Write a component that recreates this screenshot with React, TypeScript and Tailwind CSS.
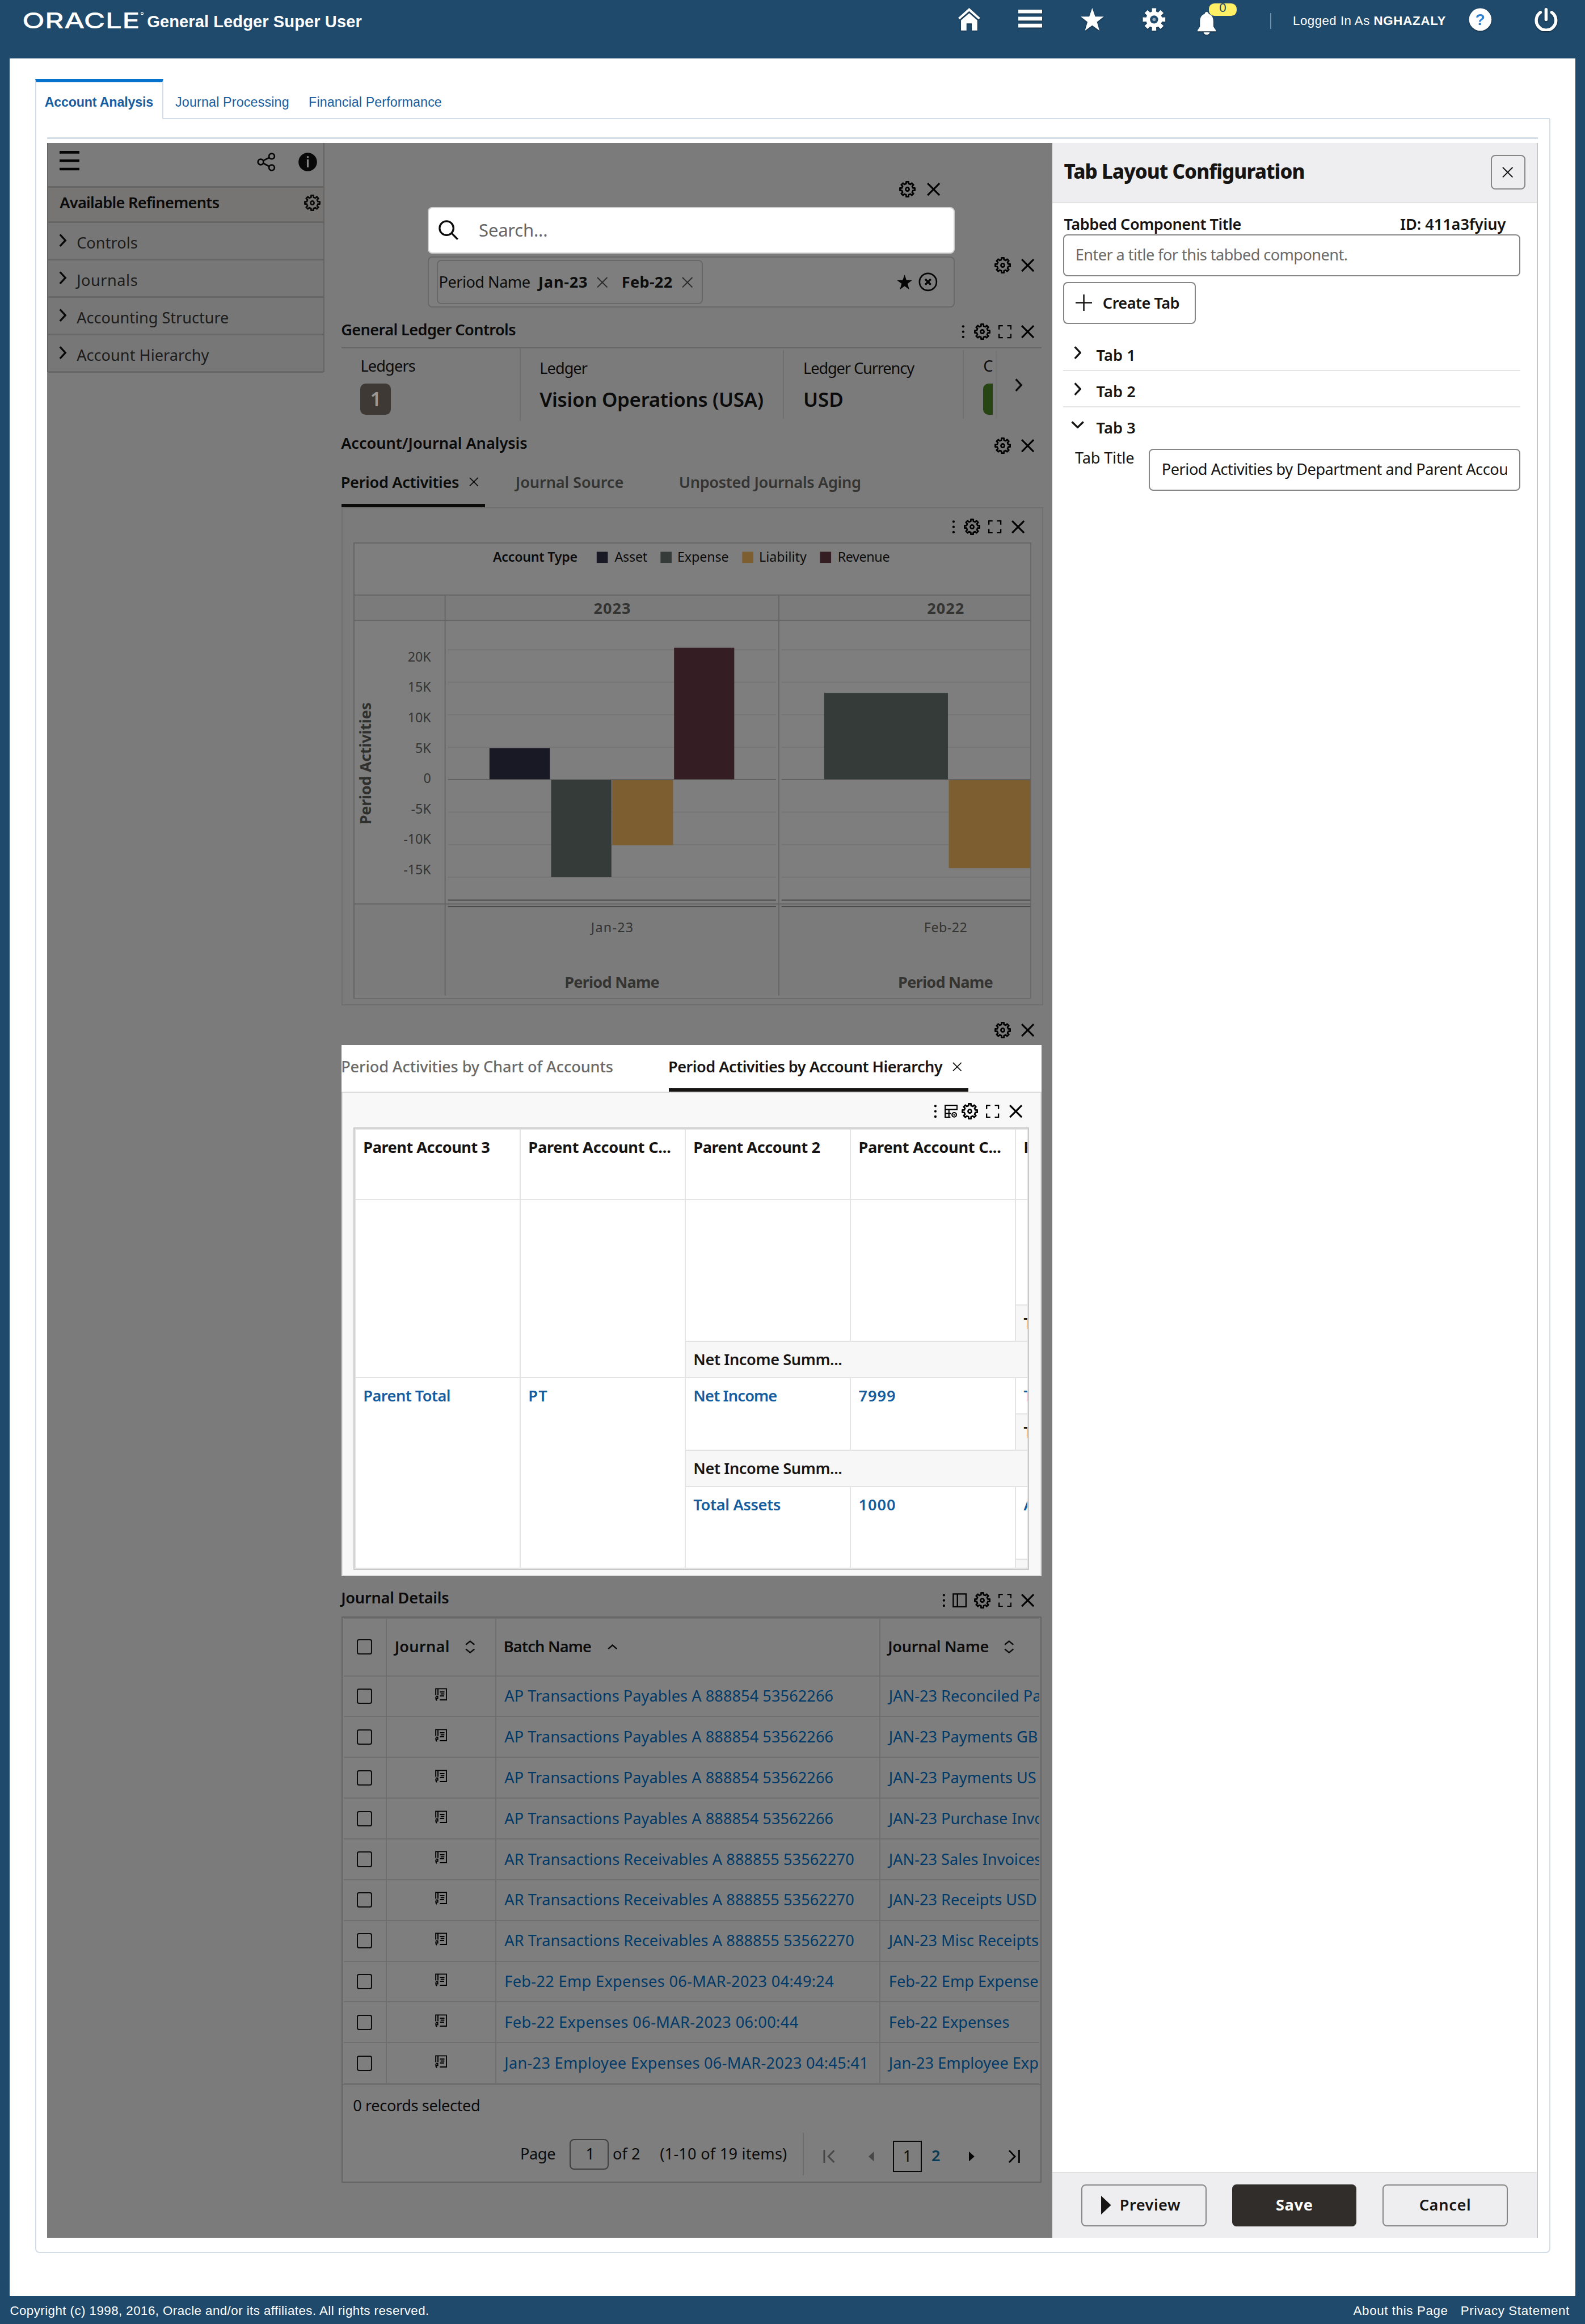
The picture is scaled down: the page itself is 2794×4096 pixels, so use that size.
import React from "react";

const NOTO = "Noto Sans";
const ARIAL = "Liberation Sans";

const SIZE: Record<string, string> = {
  "11.5": "text-[11.5px]",
  "12": "text-[12px]",
  "14": "text-[14px]",
  "15": "text-[15px]",
  "16": "text-[16px]",
  "18": "text-[18px]",
};
const WEIGHT: Record<string, string> = {
  "400": "font-normal",
  "500": "font-medium",
  "600": "font-semibold",
  "700": "font-bold",
  "800": "font-extrabold",
};

const pen = document.createElement("canvas").getContext("2d")!;

type TxtProps = {
  t: string;
  s?: number;
  g?: number;
  w?: number;
  arial?: boolean;
  className?: string;
};

/** One line of text, tracked so that it takes the width it is given. */
function Txt({ t, s = 14, g = 400, w, arial, className = "" }: TxtProps) {
  let spacing = 0;
  if (w) {
    pen.font = `${g} ${s}px "${arial ? ARIAL : NOTO}"`;
    spacing = (w + (s / 14) * 1.3 - pen.measureText(t).width) / t.length;
  }
  return (
    <span
      className={`block shrink-0 whitespace-pre leading-[20px] ${SIZE[String(s)]} ${WEIGHT[String(g)]} ${
        arial ? "font-['Liberation_Sans',sans-serif]" : "font-['Noto_Sans',sans-serif]"
      } ${className}`}
      style={{ letterSpacing: `${spacing}px` }}
    >
      {t}
    </span>
  );
}

/* ---------- icons ---------- */

function cog(teeth: number, c: number, ro: number, ri: number, wide: number, narrow: number) {
  const pts: string[] = [];
  const at = (r: number, a: number) => pts.push(`${(c + r * Math.sin(a)).toFixed(2)} ${(c - r * Math.cos(a)).toFixed(2)}`);
  for (let i = 0; i < teeth; i++) {
    const a = (i * 2 * Math.PI) / teeth;
    at(ri, a - wide);
    at(ro, a - narrow);
    at(ro, a + narrow);
    at(ri, a + wide);
  }
  return `M${pts.join("L")}Z`;
}

function Gear({ className = "" }: { className?: string }) {
  return (
    <svg viewBox="0 0 16 16" className={`h-[15px] w-[15px] shrink-0 ${className}`} fill="none" stroke="currentColor" strokeWidth="1.5">
      <path d={cog(8, 8, 7.3, 5.5, 0.22, 0.16)} strokeLinejoin="round" />
      <circle cx="8" cy="8" r="1.7" />
    </svg>
  );
}

function Cross({ className = "h-[12px] w-[12px]", thin }: { className?: string; thin?: boolean }) {
  return (
    <svg viewBox="0 0 12 12" className={`shrink-0 ${className}`} fill="none" stroke="currentColor" strokeWidth={thin ? 1.2 : 1.6}>
      <path d="M.6.6l10.8 10.8M11.4.6L.6 11.4" />
    </svg>
  );
}

function Dots({ className = "" }: { className?: string }) {
  return (
    <svg viewBox="0 0 3 12" className={`h-[12px] w-[3px] shrink-0 ${className}`} fill="currentColor">
      <circle cx="1.5" cy="1.2" r="1.1" />
      <circle cx="1.5" cy="6" r="1.1" />
      <circle cx="1.5" cy="10.8" r="1.1" />
    </svg>
  );
}

function Expand({ className = "" }: { className?: string }) {
  return (
    <svg viewBox="0 0 12 12" className={`h-[12px] w-[12px] shrink-0 ${className}`} fill="none" stroke="currentColor" strokeWidth="1.2">
      <path d="M.6 4V.6H4M8 .6h3.4V4M11.4 8v3.4H8M4 11.4H.6V8" />
    </svg>
  );
}

function Chevron({ down, className = "" }: { down?: boolean; className?: string }) {
  return down ? (
    <svg viewBox="0 0 12 7" className={`h-[7px] w-[12px] shrink-0 ${className}`} fill="none" stroke="currentColor" strokeWidth="1.7">
      <path d="M.8.8L6 5.8 11.2.8" />
    </svg>
  ) : (
    <svg viewBox="0 0 7 12" className={`h-[12px] w-[7px] shrink-0 ${className}`} fill="none" stroke="currentColor" strokeWidth="1.7">
      <path d="M.9.7L5.8 6 .9 11.3" />
    </svg>
  );
}

function GridGear({ className = "" }: { className?: string }) {
  return (
    <svg viewBox="0 0 12 12" className={`h-[12px] w-[12px] shrink-0 ${className}`} fill="none" stroke="currentColor" strokeWidth="1.1">
      <path d="M.6.6h10.800v3.700H.6zM5.400 11.400H.6V4.300M4 4.300v7.100M.6 7.900h5.200" />
      <circle cx="8.800" cy="9.200" r="2" />
      <circle cx="8.800" cy="9.200" r=".3" fill="currentColor" />
    </svg>
  );
}

function SidePanel({ className = "" }: { className?: string }) {
  return (
    <svg viewBox="0 0 13 13" className={`h-[13px] w-[13px] shrink-0 ${className}`} fill="none" stroke="currentColor" strokeWidth="1.2">
      <path d="M.7.7h11.6v11.6H.7zM4.500.7v11.6" />
    </svg>
  );
}

function Sorter() {
  return (
    <svg viewBox="0 0 9 12" className="h-[12px] w-[9px] shrink-0" fill="none" stroke="currentColor" strokeWidth="1.2">
      <path d="M.6 4L4.500.8 8.400 4M.6 8l3.900 3.200L8.400 8" />
    </svg>
  );
}

function JournalIcon() {
  return (
    <svg viewBox="0 0 11 12" className="h-[12px] w-[11px] shrink-0" fill="none" stroke="currentColor" strokeWidth="1">
      <path d="M.6 6.400V.7h9.800v10.100H4.200M2.600.7v5.700M4.300 3.600h4.200M5 5.400h3.400M4.400 7.200h3.800M.5 7.600h2.300M2.400 7.400v2.200H.7V8.200M.6 10.100l1 1.400" />
    </svg>
  );
}

function Checkbox() {
  return <span className="block h-[14px] w-[14px] shrink-0 rounded-[2px] border-[1.04px] border-[#0c0c0c]" />;
}

function GearCross() {
  return (
    <div className="ml-auto flex h-4 items-center pr-[6.2px] text-black">
      <Gear />
      <Cross className="ml-[9.6px] h-[12px] w-[12px]" />
    </div>
  );
}

function Tools({ extra }: { extra?: "grid" | "side" }) {
  return (
    <div className="ml-auto flex h-4 items-center text-black">
      <Dots />
      {extra === "grid" && <GridGear className="ml-[6.7px]" />}
      {extra === "side" && <SidePanel className="ml-[5.900px]" />}
      <Gear className={extra === "grid" ? "ml-[3.800px]" : extra === "side" ? "ml-[6.600px]" : "ml-[8.200px]"} />
      <Expand className="ml-[7.200px]" />
      <Cross className="ml-[9px] h-[12px] w-[12px]" />
    </div>
  );
}

/* ---------- page header ---------- */

function Header() {
  return (
    <header className="flex h-[53px] items-start text-white">
      <svg viewBox="0 0 112 20" className="mt-[8px] ml-[20px] h-[20px] w-[112px] shrink-0 overflow-visible" fill="#fff">
        <text x="0" y="17.400" fontFamily="Inter, sans-serif" fontWeight="500" fontSize="20" textLength="107" lengthAdjust="spacingAndGlyphs">
          ORACLE
        </text>
        <circle cx="109" cy="4" r="1" fill="none" stroke="#fff" strokeWidth=".6" />
      </svg>
      <Txt t="General Ledger Super User" s={15} g={700} w={193.8} arial className="mt-[9.600px] ml-[1.600px]" />
      <div className="ml-auto flex w-[569.600px] shrink-0 items-start">
        <svg viewBox="0 0 20 21" className="mt-[7px] h-[21px] w-[20px] drop-shadow-[0_1px_0.5px_rgba(0,0,0,.5)]" fill="#fff">
          <path d="M10 0L0 9l1.400 1.500L10 3l8.600 7.500L20 9zM10 4.800L2.600 11.200V20.500h5v-6.400h4.800v6.400h5v-9.300z" />
        </svg>
        <svg viewBox="0 0 22 17" className="mt-[9px] ml-[34.600px] h-[17px] w-[22px] drop-shadow-[0_1px_0.5px_rgba(0,0,0,.5)]" fill="#fff">
          <path d="M0 0h22v3.400H0zM0 6.500h22v3.400H0zM0 12.800h22v3.400H0z" />
        </svg>
        <svg viewBox="0 0 21 21" className="mt-[7px] ml-[34.800px] h-[21px] w-[21px] drop-shadow-[0_1px_0.5px_rgba(0,0,0,.5)]" fill="#fff">
          <path d="M10.500 0l2.700 7.800H21l-6.200 5 2.300 7.800-6.600-4.800-6.600 4.800 2.300-7.800L0 7.800h7.800z" />
        </svg>
        <svg viewBox="0 0 21 21" className="mt-[7px] ml-[35.400px] h-[21px] w-[21px] drop-shadow-[0_1px_0.5px_rgba(0,0,0,.5)]">
          <path d={cog(8, 10.5, 10.4, 7.4, 0.26, 0.19)} fill="#fff" />
          <circle cx="10.500" cy="10.500" r="3.700" fill="#1f4a6c" />
          <circle cx="10.500" cy="10.500" r="1.500" fill="#fff" opacity=".5" />
        </svg>
        <div className="relative ml-[29px] h-[31px] w-[36px]">
          <svg viewBox="0 0 17 21" className="absolute top-[10.600px] left-0 h-[21px] w-[17px] drop-shadow-[0_1px_0.5px_rgba(0,0,0,.5)]" fill="#fff">
            <path d="M8.300 0c1 0 1.700.9 1.900 1.900C13.300 2.600 14.400 5.600 14.400 8.600v4.800l2.200 3.200v1.100H0v-1.100l2.200-3.200V8.600c0-3 1.200-6 4.200-6.700C6.600.9 7.300 0 8.300 0zM5.500 18.500h5.600c-.3 1.400-1.400 2.200-2.800 2.200s-2.500-.8-2.800-2.200z" />
          </svg>
          <div className="absolute top-[3px] left-[10px] flex h-[11.600px] w-[25.400px] items-center justify-center rounded-[5px] bg-[#fff066] text-[#1f4a6c]">
            <span className="mb-[3px] font-['Liberation_Sans',sans-serif] text-[11.500px] leading-none">0</span>
          </div>
        </div>
        <div className="mt-[12px] ml-[29.600px] h-[14.400px] w-[1.040px] shrink-0 bg-[#6f93ad]" />
        <Txt t="Logged In As " s={11.5} w={73} arial className="mt-[9.200px] ml-[19.800px]" />
        <Txt t="NGHAZALY" s={11.5} g={700} w={64.8} arial className="mt-[9.200px]" />
        <svg viewBox="0 0 21 21" className="mt-[7.200px] ml-[20.500px] h-[21px] w-[21px] shrink-0 drop-shadow-[0_1px_0.5px_rgba(0,0,0,.5)]">
          <circle cx="10.500" cy="10.500" r="10.200" fill="#fff" />
          <text x="10.500" y="15.600" textAnchor="middle" fontFamily="Liberation Sans, sans-serif" fontWeight="700" fontSize="14.500" fill="#2f7fd0">
            ?
          </text>
        </svg>
        <svg viewBox="0 0 21 21" className="mt-[7.200px] ml-[38.800px] h-[21px] w-[21px] shrink-0 drop-shadow-[0_1px_0.5px_rgba(0,0,0,.5)]" fill="none" stroke="#fff" strokeWidth="2.800" strokeLinecap="round">
          <path d="M5.400 4a8.900 8.900 0 1 0 10.200 0M10.500 1.400v9.200" />
        </svg>
      </div>
    </header>
  );
}

/* ---------- sidebar ---------- */

function Sidebar() {
  const items: [string, number][] = [
    ["Controls", 54.2],
    ["Journals", 54.4],
    ["Accounting Structure", 137],
    ["Account Hierarchy", 119],
  ];
  return (
    <aside className="flex w-[252px] shrink-0 flex-col bg-[#7b7b7b]">
      <div className="h-[208.300px] border-x-[1.040px] border-[#656565]">
        <div className="flex h-[40.500px] items-start border-b-[2px] border-[#656565] text-[#050505]">
          <svg viewBox="0 0 18 18" className="mt-[7px] ml-[10px] h-[18px] w-[18px]" fill="currentColor">
            <path d="M0 0h18v2.400H0zM0 7.700h18v2.400H0zM0 15.300h18v2.400H0z" />
          </svg>
          <svg viewBox="0 0 17 17" className="mt-[8.500px] ml-[161.500px] h-[17px] w-[17px]" fill="none" stroke="currentColor" strokeWidth="1.400">
            <circle cx="13.400" cy="3.300" r="2.500" />
            <circle cx="3.400" cy="8.500" r="2.500" />
            <circle cx="13.400" cy="13.700" r="2.500" />
            <path d="M5.700 7.300l5.400-2.800M5.700 9.700l5.400 2.800" />
          </svg>
          <svg viewBox="0 0 17 17" className="mt-[8.500px] ml-[20.800px] h-[17px] w-[17px]">
            <circle cx="8.500" cy="8.500" r="8.400" fill="#080808" />
            <path d="M7.700 3.200h1.600v1.600H7.700zM7.700 6.200h1.600v7.200H7.700z" fill="#8a8a8a" />
          </svg>
        </div>
        <div className="flex h-[32px] items-start border-b-[2px] border-[#656565] bg-[#777573] text-[#0a0a0a]">
          <Txt t="Available Refinements" g={600} w={143.6} className="mt-[3.700px] ml-[10.200px]" />
          <Gear className="mt-[6px] ml-auto mr-[2.800px]" />
        </div>
        {items.map(([t, w]) => (
          <div key={t} className="flex h-[34px] items-start border-b-[1.600px] border-[#676767] bg-[#777777]">
            <Chevron className="mt-[10px] ml-[9.600px] text-[#080808]" />
            <Txt t={t} w={w} className="mt-[8.500px] ml-[9px] text-[#1c1c1c]" />
          </div>
        ))}
      </div>
    </aside>
  );
}

/* ---------- search and filters ---------- */

function SearchArea() {
  return (
    <>
      <div className="flex h-[58px] pt-[34px]">
        <div className="ml-[506.800px] flex h-4 items-center text-black">
          <Gear />
          <Cross className="ml-[10.100px] h-[12px] w-[12px]" />
        </div>
      </div>
      <div className="ml-[78.700px] flex h-[42.200px] w-[478.500px] items-center rounded-[4px] border-[1.040px] border-[#cfcfcf] bg-white">
        <svg viewBox="0 0 18 18" className="ml-[8.600px] h-[18px] w-[18px]" fill="none" stroke="#0b0b0b" strokeWidth="1.700">
          <circle cx="7.300" cy="7.300" r="6.300" />
          <path d="M11.700 11.700l5.700 5.700" />
        </svg>
        <Txt t="Search..." s={16} w={61} className="ml-[18.600px] text-[#666]" />
      </div>
      <div className="mt-[2.800px] flex h-[46.500px] items-start">
        <div className="ml-[78.700px] flex h-[46.500px] w-[478.500px] shrink-0 items-center rounded-[4px] border-[1.040px] border-[#686868] bg-[#7e7e7e]">
          <div className="ml-[6.800px] flex h-[40.300px] w-[241.800px] items-center rounded-[4px] border-[1.040px] border-[#686868] text-[#0c0c0c]">
            <Txt t="Period Name" w={81.7} className="ml-[1px]" />
            <Txt t="Jan-23" g={700} w={43.7} className="ml-[7.500px]" />
            <Cross thin className="ml-[8.200px] h-[10px] w-[10px] text-[#2c2c2c]" />
            <Txt t="Feb-22" g={700} w={45} className="ml-[12.400px]" />
            <Cross thin className="ml-[8.700px] h-[10px] w-[10px] text-[#2c2c2c]" />
          </div>
          <svg viewBox="0 0 14 14" className="ml-[176.200px] h-[14px] w-[14px]" fill="#050505">
            <path d="M7 0l1.700 5H14L9.700 8.200 11.300 13.600 7 10.400 2.700 13.600 4.300 8.200 0 5h5.300z" />
          </svg>
          <svg viewBox="0 0 18 18" className="ml-[6px] h-[17.400px] w-[17.400px]" fill="none" stroke="#050505" strokeWidth="1.400">
            <circle cx="9" cy="9" r="8" />
            <path d="M6.400 6.400l5.200 5.200M11.600 6.400l-5.200 5.200" strokeWidth="1.800" />
          </svg>
        </div>
        <GearCross />
      </div>
    </>
  );
}

function Heading({ t, w, children }: { t: string; w: number; children: React.ReactNode }) {
  return (
    <div className="flex h-full items-start">
      <Txt t={t} g={600} w={w} className="mt-[9.900px] -ml-[0.300px] text-[#0a0a0a]" />
      <div className="mt-[14px] ml-auto pr-[6.200px]">{children}</div>
    </div>
  );
}

function LedgerControls() {
  return (
    <>
      <div className="h-[36px]">
        <Heading t="General Ledger Controls" w={157.4}>
          <Tools />
        </Heading>
      </div>
      <div className="flex h-[67.500px] items-start overflow-hidden border-t-[1.040px] border-[#656565] text-[#0b0b0b]">
        <div className="h-[66px] w-[162.900px] shrink-0 border-r-[1.040px] border-[#6f6f6f] pl-[17.400px] pt-[6.200px]">
          <Txt t="Ledgers" w={48.4} />
          <div className="mt-[5.800px] flex h-[28px] w-[27.800px] items-center justify-center rounded-[5px] bg-[#3e3935]">
            <Txt t="1" s={18} g={600} className="text-[#9b9793]" />
          </div>
        </div>
        <div className="mt-[1.500px] h-[62.500px] w-[239.500px] shrink-0 border-r-[1.040px] border-[#6f6f6f] pl-[17.300px] pt-[6.500px]">
          <Txt t="Ledger" w={41.8} />
          <Txt t="Vision Operations (USA)" s={18} g={600} w={201.7} className="mt-[8.300px]" />
        </div>
        <div className="mt-[1.500px] h-[62.500px] w-[163px] shrink-0 border-r-[1.040px] border-[#6f6f6f] pl-[17.300px] pt-[6.500px]">
          <Txt t="Ledger Currency" w={99.2} />
          <Txt t="USD" s={18} g={600} w={34.8} className="mt-[8.300px]" />
        </div>
        <div className="h-[66px] w-[26.400px] shrink-0 overflow-hidden pl-[17.800px] pt-[6.200px]">
          <Txt t="C" />
          <div className="mt-[5.800px] h-[28px] w-[20px] rounded-[5px] bg-[#264513]" />
        </div>
        <div className="mt-[2px] ml-[2.600px] h-[62px] w-[2px] shrink-0 bg-linear-to-r from-[#747474] to-[#7b7b7b]" />
        <Chevron className="mt-[27px] ml-[15.500px]" />
      </div>
    </>
  );
}

/* ---------- chart ---------- */

type ChartText = { x: number; y: number; t: string; w?: number; s?: number; g?: number; a?: "start" | "middle" | "end"; c?: string };

function ChartLabel({ x, y, t, w, s = 12, g = 400, a = "start", c = "#343432" }: ChartText) {
  return (
    <text x={x} y={y} fontFamily="Noto Sans, sans-serif" fontSize={s} fontWeight={g} textAnchor={a} fill={c} textLength={w}>
      {t}
    </text>
  );
}

function Chart() {
  const grid = [590, 619.5, 649, 678.5, 737.5, 767, 796.5];
  const bars: [number, number, number, number, string][] = [
    [444.6, 679.3, 54.9, 28.9, "#181924"],
    [500.6, 708, 54.8, 88.6, "#343b39"],
    [556.1, 708, 55.3, 59.5, "#7c5e31"],
    [612.3, 588.2, 54.7, 120, "#351e23"],
    [748.7, 629.2, 112.4, 79, "#343b39"],
    [861.9, 708, 75, 80.4, "#7c5e31"],
  ];
  const ticks: [string, number][] = [
    ["20K", 600.5],
    ["15K", 628],
    ["10K", 656],
    ["5K", 683.6],
    ["0", 710.9],
    ["-5K", 738.9],
    ["-10K", 766.4],
    ["-15K", 793.9],
  ];
  const legend: [string, number, number, number, string][] = [
    ["Asset", 542, 558.3, 29.8, "#181924"],
    ["Expense", 600, 615.3, 46.7, "#343b39"],
    ["Liability", 674.2, 689.5, 43.2, "#7c5e31"],
    ["Revenue", 744.9, 761, 47.3, "#351e23"],
  ];
  return (
    <svg viewBox="321 492.500 616 414.800" className="h-[414.800px] w-[616px]">
      <rect x="321" y="492.500" width="616" height="414.800" fill="#7e7e7e" />
      <rect x="322" y="541" width="614" height="22.500" fill="#7b7b7b" />
      <rect x="322" y="821.500" width="614" height="82" fill="#7b7b7b" />
      <ChartLabel x={447.8} y={510} t="Account Type" w={76.8} g={600} c="#0c0c0c" />
      {legend.map(([t, sx, tx, w, c]) => (
        <g key={t}>
          <rect x={sx} y="501" width="10.100" height="10.100" fill={c} />
          <ChartLabel x={tx} y={510} t={t} w={w} c="#0c0c0c" />
        </g>
      ))}
      {grid.map((y) => (
        <path key={y} d={`M406.900 ${y}H704.900M710 ${y}H937`} stroke="#747474" strokeWidth="1" />
      ))}
      {bars.map(([x, y, w, h, c]) => (
        <rect key={x} x={x} y={y} width={w} height={h} fill={c} />
      ))}
      <path d="M406.900 708H704.900M710 708H937" stroke="#5c5c5c" strokeWidth="1" />
      <path d="M406.900 817.500H704.900M710 817.500H937M406.900 823.400H704.900M710 823.400H937" stroke="#4b4b4b" strokeWidth="1" />
      <g stroke="#656565" strokeWidth="1" fill="none">
        <path d="M321 540.300H937M321 563.500H937M321 820.900H937M404.300 540.300V904M707.500 540.300V904" />
        <rect x="321.500" y="493" width="615" height="413.800" />
      </g>
      <ChartLabel x={556} y={557.5} t="2023" s={14} g={700} a="middle" w={33.5} />
      <ChartLabel x={859} y={557.5} t="2022" s={14} g={700} a="middle" w={33.5} />
      {ticks.map(([t, y]) => (
        <ChartLabel key={t} x={391.5} y={y} t={t} a="end" />
      ))}
      <text transform="translate(337.100 748.800) rotate(-90)" fontFamily="Noto Sans, sans-serif" fontSize="14" fontWeight="700" fill="#2f2f2e" textLength="111">
        Period Activities
      </text>
      <ChartLabel x={556} y={846.4} t="Jan-23" a="middle" w={38.3} />
      <ChartLabel x={859} y={846.4} t="Feb-22" a="middle" w={39.2} />
      <ChartLabel x={556} y={897.3} t="Period Name" s={14} g={700} a="middle" w={86.4} />
      <ChartLabel x={859} y={897.3} t="Period Name" s={14} g={700} a="middle" w={86.4} />
    </svg>
  );
}

function AnalysisPanel() {
  return (
    <>
      <div className="h-[37px]">
        <Heading t="Account/Journal Analysis" w={168}>
          <div className="-mr-[6.200px]">
            <GearCross />
          </div>
        </Heading>
      </div>
      <div className="flex h-[41px] items-start text-[#343432]">
        <div className="flex h-[41px] w-[130.500px] shrink-0 items-start border-b-[3.100px] border-[#0b0b0a] text-[#0b0b0a]">
          <Txt t="Period Activities" g={600} w={106.1} className="mt-[8.200px] -ml-[0.500px]" />
          <Cross thin className="mt-[13.500px] ml-[9.300px] h-[8.500px] w-[8.500px]" />
        </div>
        <Txt t="Journal Source" g={600} w={96.8} className="mt-[8.200px] ml-[27.800px]" />
        <Txt t="Unposted Journals Aging" g={600} w={164.1} className="mt-[8.200px] ml-[50.300px]" />
      </div>
      <div className="h-[452.500px] w-[637.700px] border-[1.040px] border-[#6f6f6f]">
        <div className="flex h-[30.500px] items-start pt-[8.600px] pr-[15.800px]">
          <Tools />
        </div>
        <div className="ml-[9.800px]">
          <Chart />
        </div>
      </div>
    </>
  );
}

/* ---------- hierarchy panel ---------- */

function Cell({ t, w, g = 600, className = "" }: { t?: string; w?: number; g?: number; className?: string }) {
  return (
    <div className={`shrink-0 overflow-hidden border-[#e4e4e4] pt-[6.200px] pl-[7px] ${className}`}>{t && <Txt t={t} w={w} g={g} />}</div>
  );
}

function HierarchyPanel() {
  const total = (
    <Cell t="Net Income Summ..." w={133.8} className="h-[33px] w-[320px] border-b-[1.040px] border-[#dcdcdc] bg-[#f7f7f7] text-[#161513]" />
  );
  const col = "w-[150px] border-r-[1.040px]";
  return (
    <section className="h-[482.200px] w-[636px] overflow-hidden bg-white">
      <div className="flex h-[42.300px] items-start text-[#6b6a68]">
        <Txt t="Period Activities by Chart of Accounts" g={500} w={246} className="mt-[9.600px] -ml-[0.300px]" />
        <div className="ml-[50.600px] flex h-[42px] w-[272.300px] shrink-0 items-start border-b-[3.100px] border-[#161513] text-[#161513]">
          <Txt t="Period Activities by Account Hierarchy" g={600} w={247.8} className="mt-[9.600px] -ml-[0.500px]" />
          <Cross thin className="mt-[15.500px] ml-[9px] h-[8.500px] w-[8.500px]" />
        </div>
      </div>
      <div className="h-[439.900px] border-[1.040px] border-[#dedede] bg-[#f8f8f8]">
        <div className="flex h-[31px] items-start pt-[8.700px] pr-[16.100px]">
          <Tools extra="grid" />
        </div>
        <div className="ml-[9.800px] h-[402.300px] w-[614.200px] overflow-hidden border-[1.040px] border-[#c9c9c9] bg-white">
          <div className="h-[400.300px] w-[612.200px] overflow-hidden border-[1.040px] border-[#e4e4e4] text-[#145c9e]">
            <div className="flex h-[64px] border-b-[1.040px] border-[#e4e4e4] text-[#161513]">
              <Cell t="Parent Account 3" g={700} w={113.7} className={col} />
              <Cell t="Parent Account C..." g={700} w={128.2} className={col} />
              <Cell t="Parent Account 2" g={700} w={113.7} className={col} />
              <Cell t="Parent Account C..." g={700} w={128.2} className={col} />
              <Cell t="P" g={700} className="w-[20px]" />
            </div>
            <div className="flex h-[334.500px]">
              <div className="w-[150px] shrink-0 border-r-[1.040px] border-[#e4e4e4]">
                <Cell className="h-[161.800px] border-b-[1.040px]" />
                <Cell t="Parent Total" w={77.9} />
              </div>
              <div className="w-[150px] shrink-0 border-r-[1.040px] border-[#e4e4e4]">
                <Cell className="h-[161.800px] border-b-[1.040px]" />
                <Cell t="PT" w={16.5} />
              </div>
              <div className="shrink-0">
                <div className="flex h-[128.800px] border-b-[1.040px] border-[#e4e4e4]">
                  <Cell className={col} />
                  <Cell className={col} />
                  <div className="flex w-[20px] flex-col">
                    <Cell className="h-[95.800px] border-b-[1.040px]" />
                    <Cell t="T" className="h-[32px] bg-[#f7f7f7] text-[#161513]" />
                  </div>
                </div>
                {total}
                <div className="flex h-[66px] border-b-[1.040px] border-[#e4e4e4]">
                  <Cell t="Net Income" w={74.5} className={col} />
                  <Cell t="7999" w={32.8} className={col} />
                  <div className="flex w-[20px] flex-col">
                    <Cell t="T" className="h-[33px] border-b-[1.040px]" />
                    <Cell t="T" className="h-[32px] bg-[#f7f7f7] text-[#161513]" />
                  </div>
                </div>
                {total}
                <div className="flex h-[73.700px]">
                  <Cell t="Total Assets" w={77.9} className={col} />
                  <Cell t="1000" w={32.8} className={col} />
                  <div className="flex w-[20px] flex-col">
                    <Cell t="A" className="h-[66px] border-b-[1.040px]" />
                    <div className="h-[8px] bg-[#f7f7f7]" />
                  </div>
                </div>
              </div>
            </div>
          </div>
        </div>
      </div>
    </section>
  );
}

/* ---------- journal table ---------- */

const AP: [string, number] = ["AP Transactions Payables A 888854 53562266", 297.6];
const AR: [string, number] = ["AR Transactions Receivables A 888855 53562270", 316.5];
const JOURNALS: [[string, number], string][] = [
  [AP, "JAN-23 Reconciled Pa"],
  [AP, "JAN-23 Payments GB"],
  [AP, "JAN-23 Payments US"],
  [AP, "JAN-23 Purchase Invo"],
  [AR, "JAN-23 Sales Invoices"],
  [AR, "JAN-23 Receipts USD"],
  [AR, "JAN-23 Misc Receipts"],
  [["Feb-22 Emp Expenses 06-MAR-2023 04:49:24", 298.1], "Feb-22 Emp Expenses"],
  [["Feb-22 Expenses 06-MAR-2023 06:00:44", 265.9], "Feb-22 Expenses"],
  [["Jan-23 Employee Expenses 06-MAR-2023 04:45:41", 329.6], "Jan-23 Employee Exp"],
];

function JournalTable() {
  const line = "border-r-[1.040px] border-[#6f6f6f]";
  return (
    <>
      <div className="h-[36.500px]">
        <Heading t="Journal Details" w={96.8}>
          <Tools extra="side" />
        </Heading>
      </div>
      <div className="h-[514.300px] w-[636px] border-[1.040px] border-[#646464] bg-[#7e7e7e] text-[#0c0c0c]">
        <div className="mx-[1px] overflow-hidden border-t-[1.040px] border-[#6f6f6f]">
          <div className="flex h-[52.500px] border-b-[1.040px] border-[#6f6f6f]">
            <div className={`flex w-[39.400px] shrink-0 items-center pl-[12.200px] ${line}`}>
              <Checkbox />
            </div>
            <div className={`flex w-[99.200px] shrink-0 items-center pl-[7px] ${line}`}>
              <Txt t="Journal" g={600} w={48.7} />
              <span className="ml-[14.300px]">
                <Sorter />
              </span>
            </div>
            <div className={`flex w-[349px] shrink-0 items-center pl-[6.800px] ${line}`}>
              <Txt t="Batch Name" g={600} w={78.3} />
              <svg viewBox="0 0 9 5" className="ml-[15px] h-[5px] w-[9px]" fill="none" stroke="currentColor" strokeWidth="1.300">
                <path d="M.6 4.200L4.500.8l3.900 3.400" />
              </svg>
            </div>
            <div className="flex items-center pl-[7px]">
              <Txt t="Journal Name" g={600} w={90.3} />
              <span className="ml-[14px]">
                <Sorter />
              </span>
            </div>
          </div>
          {JOURNALS.map(([[batch, w], name], i) => (
            <div key={i} className="flex h-[37.040px] overflow-hidden border-b-[1.040px] border-[#6f6f6f] text-[#003a68]">
              <div className={`flex w-[39.400px] shrink-0 items-center pl-[12.200px] ${line}`}>
                <Checkbox />
              </div>
              <div className={`flex w-[99.200px] shrink-0 justify-center pt-[10.500px] text-black ${line}`}>
                <JournalIcon />
              </div>
              <div className={`flex w-[349px] shrink-0 items-center pl-[7.600px] ${line}`}>
                <Txt t={batch} w={w} />
              </div>
              <div className="flex items-center pl-[7.800px]">
                <Txt t={name} />
              </div>
            </div>
          ))}
        </div>
        <div className="h-[1px] bg-[#6f6f6f]" />
        <Txt t="0 records selected" w={114.3} className="mt-[8.700px] ml-[9.500px]" />
        <div className="mt-[14px] flex h-[40px] items-center">
          <Txt t="Page" w={30.8} className="ml-[161.400px]" />
          <div className="ml-[13px] flex h-[28px] w-[35.200px] shrink-0 items-center rounded-[4px] border-[1.040px] border-[#3f3f3f] pl-[13.500px]">
            <Txt t="1" />
          </div>
          <Txt t="of 2" w={23.8} className="ml-[3.800px]" />
          <Txt t="(1-10 of 19 items)" w={114.3} className="ml-[17.800px]" />
          <div className="ml-[14.100px] h-[38.500px] w-[1.040px] shrink-0 bg-[#6c6c6c]" />
          <svg viewBox="0 0 11 12" className="mt-[4px] ml-[17.500px] h-[12px] w-[11px] shrink-0" fill="none" stroke="#474747" strokeWidth="1.500">
            <path d="M1 0v12M10 .6L4.800 6l5.200 5.400" />
          </svg>
          <svg viewBox="0 0 5 9" className="mt-[4px] ml-[30.400px] h-[9px] w-[5px] shrink-0" fill="#474747">
            <path d="M5 0v9L0 4.500z" />
          </svg>
          <div className="mt-[3.500px] ml-[17.100px] flex h-[28.500px] w-[26.200px] shrink-0 items-center justify-center border-[1.040px] border-[#080808]">
            <Txt t="1" />
          </div>
          <Txt t="2" g={600} className="mt-[3px] ml-[8.800px] text-[#0a3a53]" />
          <svg viewBox="0 0 5 9" className="mt-[4px] ml-[26.300px] h-[9px] w-[5px] shrink-0" fill="#050505">
            <path d="M0 0v9l5-4.500z" />
          </svg>
          <svg viewBox="0 0 11 12" className="mt-[4px] ml-[30.500px] h-[12px] w-[11px] shrink-0" fill="none" stroke="#050505" strokeWidth="1.500">
            <path d="M10 0v12M1 .6L6.200 6 1 11.400" />
          </svg>
        </div>
      </div>
    </>
  );
}

/* ---------- drawer ---------- */

function TabRow({ t, w, open }: { t: string; w: number; open?: boolean }) {
  return (
    <div className={`flex h-[33px] items-start ${open ? "" : "border-b-[1.040px] border-[#e4e4e4]"}`}>
      <span className={open ? "ml-[7px] mt-[12px]" : "ml-[9.500px] mt-[10px]"}>
        <Chevron down={open} />
      </span>
      <Txt t={t} g={600} w={w} className={open ? "mt-[8.500px] ml-[11px]" : "mt-[8.500px] ml-[13.500px]"} />
    </div>
  );
}

function Drawer() {
  const field = "flex h-[38.200px] items-center overflow-hidden rounded-[4px] border-[1.040px] border-[#878684] bg-white";
  return (
    <section className="flex w-[441px] shrink-0 flex-col border-r-[1.040px] border-[#c6c6c6] bg-white text-[#161513]">
      <div className="flex h-[54.600px] items-start border-b-[1.040px] border-[#e2e2e2] bg-[#eeeef0]">
        <Txt t="Tab Layout Configuration" s={18} g={800} w={217} className="mt-[16px] ml-[10.600px]" />
        <div className="mt-[10.700px] mr-[10.200px] ml-auto flex h-[31.200px] w-[31.600px] items-center justify-center rounded-[4px] border-[1.040px] border-[#878684]">
          <Cross thin className="h-[10px] w-[10px]" />
        </div>
      </div>
      <div className="flex-1 pr-[15px] pl-[10px]">
        <div className="flex h-[28px] items-start pt-[9.100px]">
          <Txt t="Tabbed Component Title" g={600} w={159.7} className="ml-[0.600px]" />
          <Txt t="ID: 411a3fyiuy" g={600} w={94.7} className="mr-[13px] ml-auto" />
        </div>
        <div className={field}>
          <Txt t="Enter a title for this tabbed component." w={246} className="ml-[10px] text-[#6b6a68]" />
        </div>
        <div className="mt-[5.200px] flex h-[38.300px] w-[120.500px] items-center rounded-[4px] border-[1.040px] border-[#878684]">
          <svg viewBox="0 0 15 15" className="ml-[10.300px] h-[15px] w-[15px]" fill="none" stroke="currentColor" strokeWidth="1.300">
            <path d="M7.500 0v15M0 7.500h15" />
          </svg>
          <Txt t="Create Tab" g={600} w={68.4} className="ml-[9.500px]" />
        </div>
        <div className="mt-[10px]">
          <TabRow t="Tab 1" w={34.5} />
          <TabRow t="Tab 2" w={34.5} />
          <TabRow t="Tab 3" w={34.5} open />
        </div>
        <div className="mt-[4.300px] flex items-start">
          <Txt t="Tab Title" w={52.5} className="mt-[-1.500px] ml-[10.700px]" />
          <div className={`${field} ml-auto w-[337.600px] px-[11px]`}>
            <div className="w-full overflow-hidden">
              <Txt t="Period Activities by Department and Parent Accou" w={313.5} />
            </div>
          </div>
        </div>
      </div>
      <div className="flex h-[59.500px] items-start border-t-[1.040px] border-[#e2e2e2] bg-[#eeeef0]">
        <div className="mt-[10px] ml-[26.400px] flex h-[38.300px] w-[113.600px] items-center rounded-[4px] border-[1.040px] border-[#878684]">
          <svg viewBox="0 0 9 17" className="ml-[16.800px] h-[17px] w-[9px]" fill="currentColor">
            <path d="M0 0v17l9-8.500z" />
          </svg>
          <Txt t="Preview" g={600} w={54} className="ml-[8px]" />
        </div>
        <div className="mt-[10px] ml-[23.500px] flex h-[38.300px] w-[113px] items-center justify-center rounded-[4px] bg-[#312d2a] text-white">
          <Txt t="Save" g={700} w={32.5} />
        </div>
        <div className="mt-[10px] ml-[23.700px] flex h-[38.300px] w-[113.500px] items-center justify-center rounded-[4px] border-[1.040px] border-[#878684]">
          <Txt t="Cancel" g={600} w={46} />
        </div>
      </div>
    </section>
  );
}

/* ---------- page ---------- */

export default function App() {
  return (
    <div className="h-[4096px] w-full overflow-hidden bg-[#1f4a6c]">
      <div className="flex h-[2111px] w-[1440px] flex-col [zoom:1.9403]">
        <Header />
        <main className="mx-[9px] h-[2033px] bg-white px-[23px] pt-[18.400px]">
          <nav className="relative flex h-[36.700px] items-start text-[#155ea2]">
            <div className="flex h-[36.700px] w-[116.600px] shrink-0 items-start border-x-[1.040px] border-t-[3.100px] border-[#d3dde7] border-t-[#0572ce] bg-white">
              <Txt t="Account Analysis" s={12} g={700} w={98} arial className="mt-[8.500px] ml-[7.500px]" />
            </div>
            <Txt t="Journal Processing" s={12} w={102.4} arial className="mt-[11.600px] ml-[10.700px]" />
            <Txt t="Financial Performance" s={12} w={120} arial className="mt-[11.600px] ml-[17.700px]" />
          </nav>
          <div className="-mt-[1.040px] flex">
            <div className="h-[1.100px] w-[1.040px] bg-[#d3dde7]" />
            <div className="h-[1.100px] w-[114.500px] shrink-0" />
            <div className="h-[1.100px] w-[1261px] bg-[#d3dde7]" />
          </div>
          <div className="h-[1938.500px] w-[1376.500px] rounded-b-[4px] border-x-[1.040px] border-b-[1.040px] border-[#d3dde7] px-[10px] pt-[16.800px]">
            <div className="h-[1.100px] w-[1354px] bg-[#d3dde7]" />
            <div className="mt-[4px] flex h-[1902.500px] w-[1354px] bg-[#7b7b7b]">
              <Sidebar />
              <div className="w-[661px] shrink-0 overflow-hidden pl-[15.100px]">
                <div className="w-[636px]">
                  <SearchArea />
                  <LedgerControls />
                  <AnalysisPanel />
                  <div className="flex h-[36px] pt-[14px]">
                    <GearCross />
                  </div>
                  <HierarchyPanel />
                  <JournalTable />
                </div>
              </div>
              <Drawer />
            </div>
          </div>
        </main>
        <footer className="flex h-[25px] items-start px-[9px] pt-[3.300px] text-white">
          <Txt t="Copyright (c) 1998, 2016, Oracle and/or its affiliates. All rights reserved." s={11.5} w={380.8} arial />
          <Txt t="About this Page" s={11.5} w={85} arial className="ml-auto" />
          <Txt t="Privacy Statement" s={11.5} w={98} arial className="mr-[5px] ml-[11.500px]" />
        </footer>
      </div>
    </div>
  );
}
